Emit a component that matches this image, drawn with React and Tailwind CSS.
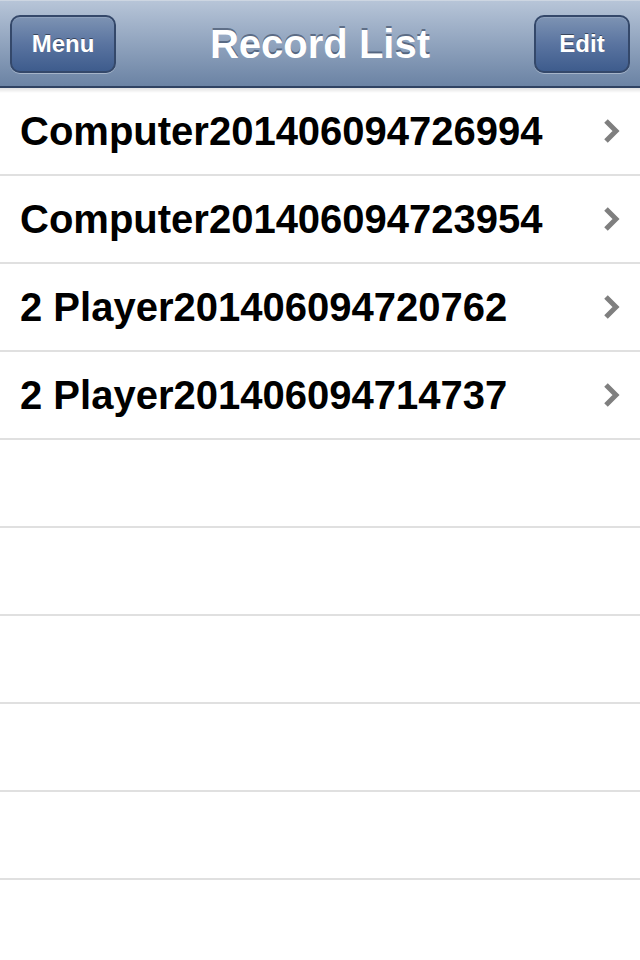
import React from 'react'

const records = [
  'Computer201406094726994',
  'Computer201406094723954',
  '2 Player201406094720762',
  '2 Player201406094714737',
]

function Chevron() {
  return (
    <svg width="18" height="26" viewBox="0 0 18 26" className="shrink-0">
      <path d="M4 3 L14 13 L4 23" fill="none" stroke="#7f7f7f" strokeWidth="5" />
    </svg>
  )
}

function NavButton({ label, className }) {
  return (
    <button
      type="button"
      className={`${className} h-[58px] rounded-[10px] border-2 border-[#34486a] bg-gradient-to-b from-[#7d93b3] via-[#5a74a0] to-[#3e5c8d] text-white text-[24px] font-bold shadow-[0_1px_0_rgba(255,255,255,0.35),inset_0_1px_0_rgba(255,255,255,0.15)] [text-shadow:0_-1px_0_rgba(0,0,0,0.45)]`}
    >
      {label}
    </button>
  )
}

export default function App() {
  const emptyRows = 5

  return (
    <div className="w-[640px] h-[960px] bg-white overflow-hidden font-['Liberation_Sans',Arial,sans-serif]">
      {/* barra de navegacion */}
      <div className="relative h-[88px] bg-gradient-to-b from-[#b7c5d8] to-[#6b83a4] border-t border-[#cdd6e2] border-b-2 border-b-[#2f4262] grid grid-cols-[1fr_auto_1fr] items-center px-[10px]">
        <NavButton label="Menu" className="w-[106px] justify-self-start" />
        <h1 className="text-white text-[40px] font-bold [text-shadow:0_-2px_0_rgba(40,55,80,0.55)]">Record List</h1>
        <NavButton label="Edit" className="w-[96px] justify-self-end" />
        <div className="absolute left-0 right-0 -bottom-[7px] h-[5px] bg-gradient-to-b from-[rgba(0,0,0,0.12)] to-transparent" />
      </div>

      {/* lista */}
      <div>
        {records.map((r) => (
          <div key={r} className="h-[88px] border-b-2 border-[#e0e0e0] flex items-center justify-between pl-[20px] pr-[20px]">
            <span className="text-[40px] font-bold text-black">{r}</span>
            <Chevron />
          </div>
        ))}
        {Array.from({ length: emptyRows }).map((_, i) => (
          <div key={i} className="h-[88px] border-b-2 border-[#e0e0e0]" />
        ))}
      </div>
    </div>
  )
}
